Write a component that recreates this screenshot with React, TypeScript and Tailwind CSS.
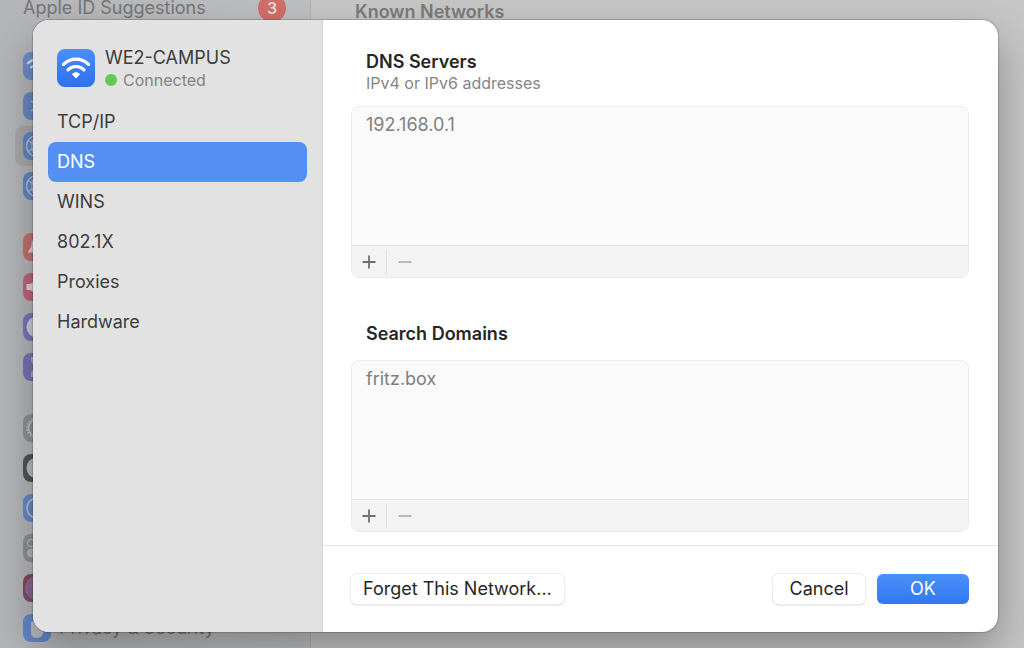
import { useState, type ReactNode } from 'react'
import clsx from 'clsx'

const TABS = ['TCP/IP', 'DNS', 'WINS', '802.1X', 'Proxies', 'Hardware']

function WifiGlyph({ className }: { className?: string }) {
  return (
    <svg viewBox="0 0 38 38" className={className} fill="none" stroke="white" aria-hidden="true">
      <path d="M6.5 15.4a17.5 17.5 0 0 1 25 0" strokeWidth="3.2" strokeLinecap="round" />
      <path d="M11 20.8a11.4 11.4 0 0 1 16 0" strokeWidth="3.2" strokeLinecap="round" />
      <path d="M19 29l-3.600-3.800a5 5 0 0 1 7.200 0z" fill="white" strokeWidth="1" strokeLinejoin="round" />
    </svg>
  )
}

function GlobeGlyph() {
  return (
    <svg viewBox="0 0 28 28" className="size-7" fill="none" stroke="#b9c4d8" strokeWidth="1.2" aria-hidden="true">
      <circle cx="14" cy="14" r="10.5" />
      <ellipse cx="14" cy="14" rx="5" ry="10.5" />
      <path d="M5 8.500l18 11M5 19.500l18-11M14 3.500v21" />
    </svg>
  )
}

function DotGlyph({ color }: { color: string }) {
  return (
    <svg viewBox="0 0 28 28" className="size-7" aria-hidden="true">
      <circle cx="14" cy="14" r="10.5" fill={color} />
    </svg>
  )
}

function RingGlyph({ dashed }: { dashed?: boolean }) {
  return (
    <svg viewBox="0 0 28 28" className="size-7" fill="none" stroke="#bcc0c6" aria-hidden="true">
      <circle cx="14" cy="14" r={dashed ? 8.5 : 10} strokeWidth="1.6" />
      {dashed && <circle cx="14" cy="14" r="10" strokeWidth="1.8" strokeDasharray="1.500 1.640" />}
    </svg>
  )
}

interface BackgroundItem {
  name: string
  tile: string
  glyph: ReactNode
  selected?: boolean
  label?: string
}

const GROUPS: BackgroundItem[][] = [
  [
    { name: 'wifi', tile: 'bg-[#6d8ec8]', glyph: <WifiGlyph className="size-7 opacity-70" /> },
    {
      name: 'bluetooth',
      tile: 'bg-[#6889c3]',
      glyph: (
        <svg viewBox="0 0 28 28" className="size-7" fill="none" stroke="#b9c4d8" strokeWidth="1.6" aria-hidden="true">
          <path d="M8.500 9l11 10-5.500 4.500v-19l5.500 4.500-11 10" />
        </svg>
      ),
    },
    { name: 'network', tile: 'bg-[#6486c2]', glyph: <GlobeGlyph />, selected: true },
    { name: 'vpn', tile: 'bg-[#6486c2]', glyph: <GlobeGlyph /> },
  ],
  [
    {
      name: 'notifications',
      tile: 'bg-[#c4716d]',
      glyph: (
        <svg viewBox="0 0 28 28" className="size-7" fill="#dcd3d3" aria-hidden="true">
          <path d="M14 5c-4 0-5.500 3-5.500 6.500 0 4-3.500 5.500-3.500 8h18c0-2.500-3.500-4-3.500-8C19.500 8 18 5 14 5z" />
        </svg>
      ),
    },
    {
      name: 'sound',
      tile: 'bg-[#c2647c]',
      glyph: (
        <svg viewBox="0 0 28 28" className="size-7" fill="#dcd3d6" aria-hidden="true">
          <path d="M3.500 11h4l6-5v16l-6-5h-4z" />
        </svg>
      ),
    },
    { name: 'focus', tile: 'bg-[#7a76b6]', glyph: <DotGlyph color="#cccbd8" /> },
    {
      name: 'screen-time',
      tile: 'bg-[#7773b4]',
      glyph: (
        <svg viewBox="0 0 28 28" className="size-7" fill="#b5b3ce" aria-hidden="true">
          <path d="M8 4h12v3c0 3-3 5-4 7 1 2 4 4 4 7v3H8v-3c0-3 3-5 4-7-1-2-4-4-4-7z" />
        </svg>
      ),
    },
  ],
  [
    { name: 'general', tile: 'bg-[#909192]', glyph: <RingGlyph dashed /> },
    { name: 'appearance', tile: 'bg-[#525354]', glyph: <DotGlyph color="#b9babb" /> },
    { name: 'accessibility', tile: 'bg-[#658ac9]', glyph: <RingGlyph /> },
    {
      name: 'control-center',
      tile: 'bg-[#8e8f90]',
      glyph: (
        <svg viewBox="0 0 28 28" className="size-7" fill="#b4b5b6" stroke="#b4b5b6" strokeWidth="1.400" aria-hidden="true">
          <circle cx="8" cy="9" r="3.500" fill="none" />
          <rect x="4.500" y="15.500" width="19" height="7" rx="3.500" />
        </svg>
      ),
    },
    {
      name: 'siri',
      tile: 'bg-linear-to-b from-[#83485c] to-[#765072]',
      glyph: (
        <svg viewBox="0 0 28 28" className="size-7" fill="#85648f" stroke="#9c6a8c" strokeWidth="1.500" aria-hidden="true">
          <circle cx="14" cy="14" r="11" />
          <path d="M4 14q10-7 20 0" fill="none" />
        </svg>
      ),
    },
    {
      name: 'privacy',
      tile: 'bg-[#6488ca]',
      label: 'Privacy & Security',
      glyph: (
        <svg viewBox="0 0 28 28" className="size-7" fill="#b9bdc5" aria-hidden="true">
          <path d="M8 8q1.500-1.500 3 0V4h8v9q2-2 3 0l-2 7q-2 4-6 4-6 0-6-6z" />
        </svg>
      ),
    },
  ],
]

// Settings window behind the sheet
function SettingsBackdrop() {
  return (
    <div className="flex h-full">
      <aside className="w-[311px] shrink-0 border-r border-[#b2b3b4] bg-linear-to-r from-[#b3b5b8] to-[#bebfc0] px-[15px]">
        <div className="flex h-4 items-center justify-between pr-[9px] pl-2">
          <span className="text-lg leading-4 text-[#757677]">Apple ID Suggestions</span>
          <span className="flex size-7 items-center justify-center rounded-full bg-[#d16f69] text-base leading-4 font-semibold text-[#e4dcdc]">
            3
          </span>
        </div>
        <div className="mt-[30px] flex flex-col gap-[21px]">
          {GROUPS.map((group) => (
            <ul key={group[0].name}>
              {group.map((item) => (
                <li
                  key={item.name}
                  className={clsx('flex h-10 items-center gap-2 rounded-lg px-2', item.selected && 'bg-[#a6a8ab]')}
                >
                  <span className={`size-7 shrink-0 overflow-hidden rounded-lg ${item.tile}`}>{item.glyph}</span>
                  {item.label && <span className="text-lg leading-6 text-[#77787a]">{item.label}</span>}
                </li>
              ))}
            </ul>
          ))}
        </div>
      </aside>
      <main className="flex-1 bg-[#c6c6c6] px-11">
        <h1 className="text-lg leading-6 font-semibold text-[#7b7b7b]">Known Networks</h1>
      </main>
    </div>
  )
}

interface ListBoxProps {
  id: string
  title: string
  subtitle?: string
  items: string[]
}

function ListBox({ id, title, subtitle, items }: ListBoxProps) {
  return (
    <section aria-labelledby={id}>
      <div className="px-[15px]">
        <h2 id={id} className="text-lg leading-6 font-semibold text-[#262626]">
          {title}
        </h2>
        {subtitle && <p className="text-base leading-[18px] text-[#848484]">{subtitle}</p>}
      </div>
      <div className="mt-3.5 overflow-hidden rounded-lg border border-[#ebebeb] bg-[#fafafa]">
        <ul className="h-[138px] px-3.5 py-1.5">
          {items.map((item) => (
            <li key={item} className="text-lg leading-6 text-[#808080]">
              {item}
            </li>
          ))}
        </ul>
        <div className="flex h-8 items-center border-t border-[#e6e6e6] bg-[#f3f3f3]">
          <button type="button" aria-label={`Add to ${title}`} className="flex h-6 w-[35px] items-center justify-center border-r border-[#e2e2e2]">
            <svg viewBox="0 0 14 14" className="size-3.5" stroke="#6f6f6f" strokeWidth="1.800" aria-hidden="true">
              <path d="M7 .5v13M.5 7h13" />
            </svg>
          </button>
          <button type="button" disabled aria-label={`Remove from ${title}`} className="flex h-6 w-[35px] items-center justify-center">
            <svg viewBox="0 0 14 14" className="size-3.5" stroke="#bababa" strokeWidth="1.800" aria-hidden="true">
              <path d="M.5 7h13" />
            </svg>
          </button>
        </div>
      </div>
    </section>
  )
}

export default function App() {
  const [tab, setTab] = useState('DNS')

  const plainButton =
    'h-[30px] rounded-md bg-white px-3 text-lg leading-6 text-[#262626] shadow-[0_0_0_1px_#ececec,0_1px_2px_rgba(0,0,0,0.25)]'

  return (
    <div className="relative min-h-screen overflow-hidden bg-[#c6c6c6] font-['Inter',sans-serif]">
      <div className="absolute inset-0" aria-hidden="true">
        <SettingsBackdrop />
      </div>

      {/* Network details sheet */}
      <div className="relative flex min-h-screen pt-5 pr-[26px] pb-4 pl-[33px]">
        <div
          role="dialog"
          aria-label="WE2-CAMPUS"
          className="flex flex-1 overflow-hidden rounded-2xl bg-white shadow-[0_0_1px_1px_rgba(0,0,0,0.18),0_20px_44px_rgba(0,0,0,0.3)]"
        >
          <aside className="w-[290px] shrink-0 border-r border-[#d2d2d2] bg-[#e2e2e2] px-[15px]">
            <div className="flex items-center gap-2.5 px-[9px] pt-[26px] pb-3">
              <span className="size-[38px] shrink-0 rounded-lg bg-linear-to-b from-[#4a90f8] to-[#2f6ff0]">
                <WifiGlyph className="size-[38px]" />
              </span>
              <div>
                <p className="text-lg leading-6 text-[#3c3c3c]">WE2-CAMPUS</p>
                <p className="flex items-center gap-1.5 text-base leading-5 text-[#838383]">
                  <span className="size-3 rounded-full bg-[#5fcb50]" />
                  Connected
                </p>
              </div>
            </div>
            <nav className="flex flex-col">
              {TABS.map((name) => (
                <button
                  key={name}
                  type="button"
                  onClick={() => setTab(name)}
                  className={clsx(
                    'h-10 rounded-lg px-[9px] text-left text-lg leading-6',
                    tab === name ? 'bg-[#558ff3] text-white' : 'text-[#3c3c3c]',
                  )}
                >
                  {name}
                </button>
              ))}
            </nav>
          </aside>

          <div className="flex min-w-0 flex-1 flex-col">
            <div className="flex flex-1 flex-col gap-11 pt-[30px] pr-[29px] pb-3 pl-7">
              <ListBox id="dns-servers" title="DNS Servers" subtitle="IPv4 or IPv6 addresses" items={['192.168.0.1']} />
              <ListBox id="search-domains" title="Search Domains" items={['fritz.box']} />
            </div>
            <footer className="flex items-center gap-3 border-t border-[#e4e4e4] py-7 pr-[29px] pl-7">
              <button type="button" className={`${plainButton} mr-auto`}>
                Forget This Network...
              </button>
              <button type="button" className={`${plainButton} w-[92px]`}>
                Cancel
              </button>
              <button
                type="button"
                className="h-[30px] w-[92px] rounded-md bg-linear-to-b from-[#4a90f8] to-[#3277f3] text-lg leading-6 text-white"
              >
                OK
              </button>
            </footer>
          </div>
        </div>
      </div>
    </div>
  )
}
